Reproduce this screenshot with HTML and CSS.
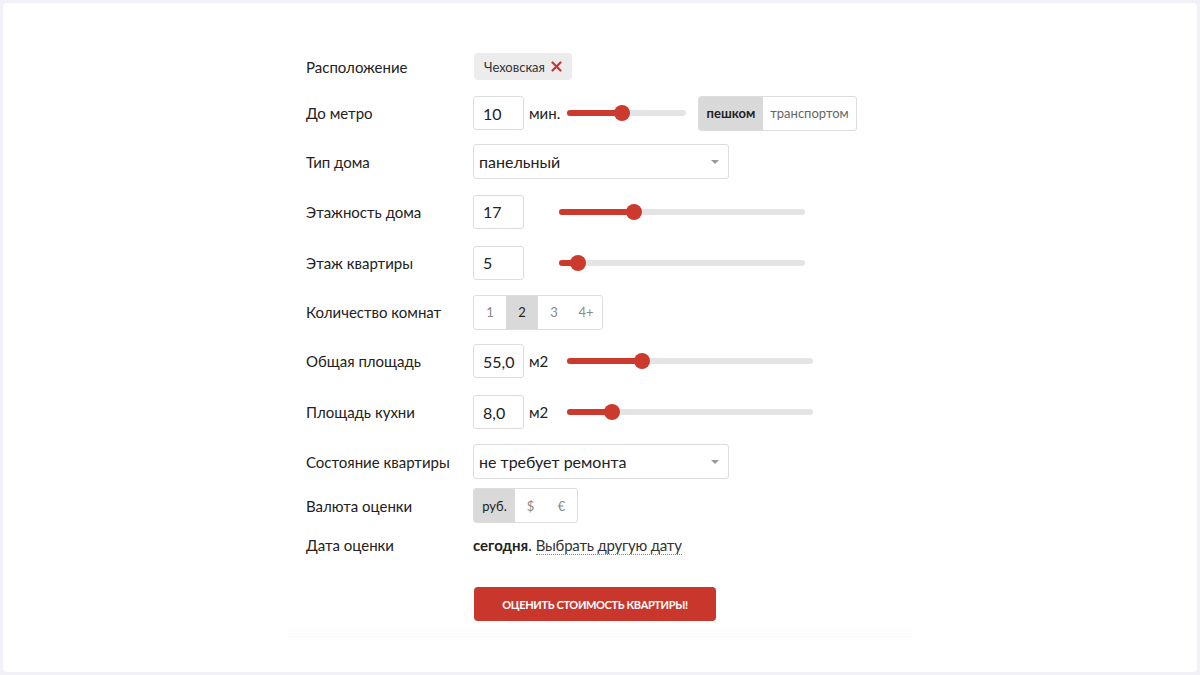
FILE: index.html
```html
<!DOCTYPE html>
<html lang="ru">
<head>
<meta charset="utf-8">
<link rel="stylesheet" href="styles.css">
</head>
<body>
<div class="frame">
  <div class="form">
    <div class="grid">
      <div class="label">Расположение</div>
      <div class="ctrl">
        <span class="chip">Чеховская <svg class="chip-x" width="11" height="11" viewBox="0 0 11 11"><path d="M1.5 1.5L9.5 9.5M9.5 1.5L1.5 9.5" stroke="#c9372c" stroke-width="2.2" stroke-linecap="round"/></svg></span>
      </div>

      <div class="label">До метро</div>
      <div class="ctrl">
        <div class="num">10</div>
        <div class="unit">мин.</div>
        <div class="slider s-short"><div class="fill" style="width:55px"></div><div class="thumb" style="left:55px"></div></div>
        <div class="seg seg-mode">
          <div class="cell on c-walk">пешком</div>
          <div class="cell c-trans">транспортом</div>
        </div>
      </div>

      <div class="label">Тип дома</div>
      <div class="ctrl">
        <div class="select">панельный<span class="caret"></span></div>
      </div>

      <div class="label">Этажность дома</div>
      <div class="ctrl">
        <div class="num">17</div>
        <div class="slider s-wide s-gap"><div class="fill" style="width:75px"></div><div class="thumb" style="left:75px"></div></div>
      </div>

      <div class="label">Этаж квартиры</div>
      <div class="ctrl">
        <div class="num">5</div>
        <div class="slider s-wide s-gap"><div class="fill" style="width:19px"></div><div class="thumb" style="left:19px"></div></div>
      </div>

      <div class="label">Количество комнат</div>
      <div class="ctrl">
        <div class="seg seg-rooms">
          <div class="cell">1</div>
          <div class="cell on">2</div>
          <div class="cell">3</div>
          <div class="cell">4+</div>
        </div>
      </div>

      <div class="label">Общая площадь</div>
      <div class="ctrl">
        <div class="num">55,0</div>
        <div class="unit">м2</div>
        <div class="slider s-wide"><div class="fill" style="width:75px"></div><div class="thumb" style="left:75px"></div></div>
      </div>

      <div class="label">Площадь кухни</div>
      <div class="ctrl">
        <div class="num">8,0</div>
        <div class="unit">м2</div>
        <div class="slider s-wide"><div class="fill" style="width:45px"></div><div class="thumb" style="left:45px"></div></div>
      </div>

      <div class="label">Состояние квартиры</div>
      <div class="ctrl">
        <div class="select">не требует ремонта<span class="caret"></span></div>
      </div>

      <div class="label">Валюта оценки</div>
      <div class="ctrl">
        <div class="seg seg-cur">
          <div class="cell on">руб.</div>
          <div class="cell">$</div>
          <div class="cell">€</div>
        </div>
      </div>

      <div class="label">Дата оценки</div>
      <div class="ctrl date">
        <b>сегодня</b>.&nbsp;<span class="dotted">Выбрать другую дату</span>
      </div>
    </div>
    <div class="actions">
      <button class="btn">Оценить стоимость квартиры!</button>
    </div>
  </div>
</div>
</body>
</html>
```

FILE: styles.css
```css
* { box-sizing: border-box; }
html, body { margin: 0; padding: 0; }
body {
  background: #f3f1f8;
  width: 1200px;
  height: 675px;
  padding: 3px;
  font-family: Lato, "Open Sans", sans-serif;
  color: #222;
}
.frame {
  background: #fff;
  border-radius: 4px;
  height: 669px;
  padding-top: 41px;
}
.form {
  width: 624px;
  margin-left: 285px;
  padding-left: 18px;
  padding-bottom: 15px;
  border-bottom: 1px solid #f7f7f7;
  background: linear-gradient(to bottom, #fff 0, #fff calc(100% - 10px), #fcfcfc 100%);
}
.grid {
  display: grid;
  grid-template-columns: 167px 1fr;
  grid-template-rows: 45px 48px 49px 51px 51px 48px 50px 52px 47px 41px 38px;
}
.label {
  display: flex;
  align-items: center;
  font-size: 15px;
  color: #222;
}
.ctrl {
  display: flex;
  align-items: center;
}
.chip {
  display: inline-flex;
  align-items: center;
  height: 27px;
  padding: 0 10px 0 10px;
  margin-left: 1px;
  background: #ececec;
  border-radius: 4px;
  font-size: 13px;
  color: #333;
  gap: 6px;
}
.num {
  width: 51px;
  height: 34px;
  border: 1px solid #ddd;
  border-radius: 3px;
  display: flex;
  align-items: center;
  padding-left: 9px;
  font-size: 16px;
  color: #222;
}
.unit {
  width: 43px;
  padding-left: 5px;
  font-size: 15px;
  color: #222;
}
.slider {
  position: relative;
  height: 6px;
  border-radius: 3px;
  background: #e4e4e4;
}
.s-short { width: 119px; }
.s-wide { width: 246px; }
.s-gap { margin-left: 35px; }
.fill {
  height: 6px;
  border-radius: 3px;
  background: #cc3a2e;
}
.thumb {
  position: absolute;
  top: -5px;
  width: 16px;
  height: 16px;
  margin-left: -8px;
  border-radius: 50%;
  background: #cc3a2e;
}
.seg {
  display: flex;
  height: 35px;
  border: 1px solid #ddd;
  border-radius: 3px;
  overflow: hidden;
  font-size: 13px;
}
.seg .cell {
  display: flex;
  align-items: center;
  justify-content: center;
  color: #888;
}
.seg .cell.on {
  background: #d9d9d9;
  color: #222;
}
.seg-mode { margin-left: 12px; }
.seg-mode .cell { color: #666; }
.seg-mode .cell.on { font-weight: 700; color: #222; }
.c-walk { width: 64px; }
.c-trans { width: 93px; }
.seg-rooms .cell { width: 32px; }
.seg-cur .cell { width: 31px; }
.seg-cur .cell.on { width: 41px; }
.select {
  position: relative;
  width: 256px;
  height: 35px;
  border: 1px solid #ddd;
  border-radius: 3px;
  display: flex;
  align-items: center;
  padding-left: 5px;
  font-size: 16px;
  color: #222;
}
.caret {
  position: absolute;
  right: 9px;
  top: 15px;
  width: 0;
  height: 0;
  border-left: 4px solid transparent;
  border-right: 4px solid transparent;
  border-top: 4px solid #999;
}
.date {
  font-size: 15px;
  color: #222;
}
.dotted {
  color: #333;
  border-bottom: 1px dotted #888;
  line-height: 18px;
  letter-spacing: -0.2px;
}
.actions {
  padding-left: 168px;
  padding-top: 23px;
}
.btn {
  width: 242px;
  height: 34px;
  border: none;
  border-radius: 4px;
  background: #c9372c;
  color: #fff;
  font-family: inherit;
  font-size: 11px;
  font-weight: 700;
  letter-spacing: -0.35px;
  text-transform: uppercase;
}
```
